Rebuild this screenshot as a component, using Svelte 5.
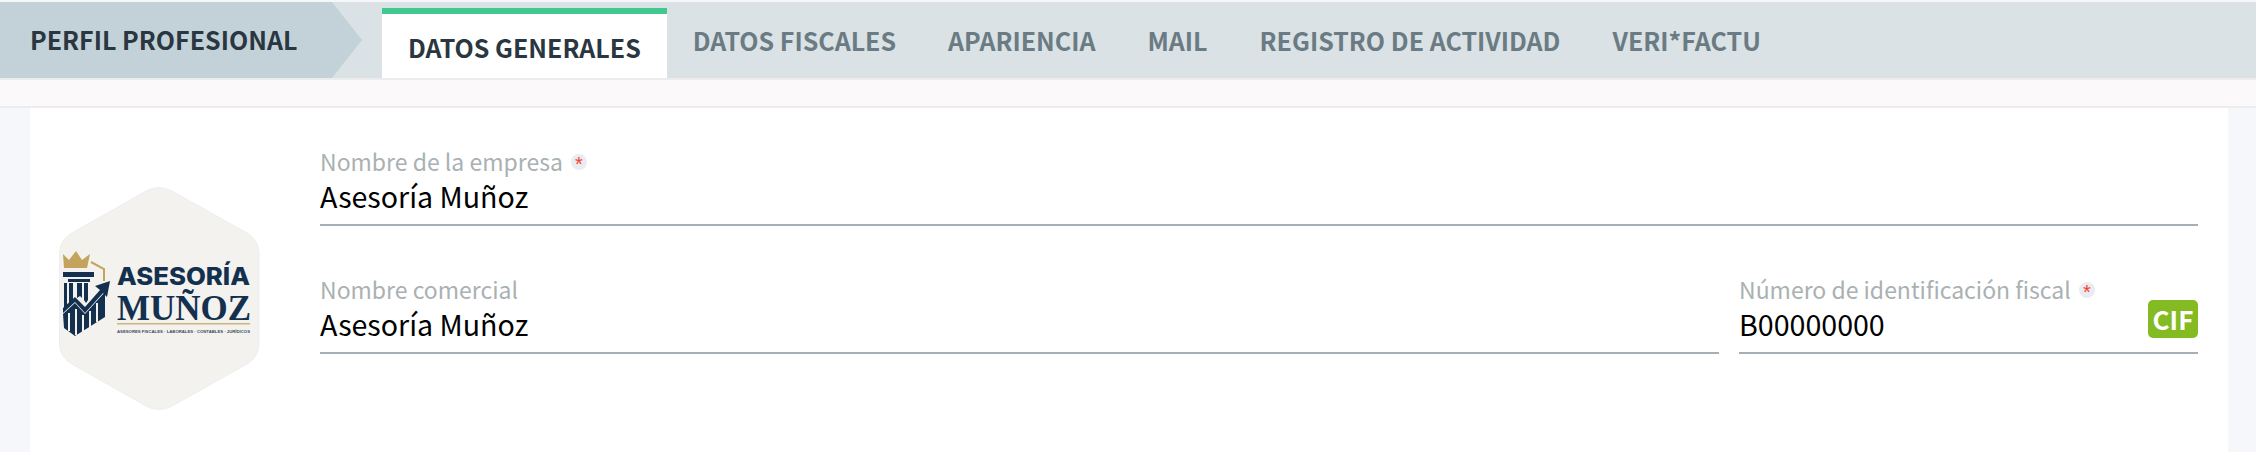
<script>
  const tabs = ["DATOS FISCALES", "APARIENCIA", "MAIL", "REGISTRO DE ACTIVIDAD", "VERI*FACTU"];
</script>

<div class="page">
  <nav class="bar">
    <div class="crumb">PERFIL PROFESIONAL</div>
    <div class="tab active">DATOS GENERALES</div>
    {#each tabs as tab}
      <div class="tab">{tab}</div>
    {/each}
  </nav>
  <div class="stripe"></div>
  <main class="content">
    <div class="logo">
      <svg width="203" height="223" viewBox="0 0 203 223">
        <path
          d="M87 4 Q100 -3 113 4 L188 46 Q200 53 200 67 L200 156 Q200 170 188 177 L113 219 Q100 226 87 219 L13 177 Q0.500 170 0.500 156 L0.500 67 Q0.500 53 13 46 Z"
          fill="#f3f2ef"
          stroke="#eceef0"
        />
        <g class="mark">
          <path d="M5 81 L4 67 L10 73 L17 64 L23 73 L31 67 L28 81 Z" fill="#c4a35c" />
          <path d="M32 75 L45 82 L45 94" fill="none" stroke="#c4a35c" stroke-width="2" />
          <path d="M4 85 H35 V90 H4 Z M9 92 H31 V95 H9 Z" fill="#14304f" />
          <path
            d="M5 96 H8 V120 L5 122 Z M10 96 H14 V114 L10 117 Z M18 96 H23 V111 L21 109 L18 111 Z M25 96 H29 V113 L27 116 L25 113 Z"
            fill="#14304f"
          />
          <path
            d="M4 127 L16 116 L26 127 L46 105 V130 L16 149 L5 141 Z"
            fill="#14304f"
          />
          <path d="M10 126 V144 M17 122 V148 M24 128 V145 M31 124 V140 M38 116 V135" stroke="#f3f2ef" stroke-width="2" />
          <path d="M4 121 L16 110 L26 120 L41 103 L36 99 L51 94 L48 110 L44 106 L26 126 L16 115 L4 126 Z" fill="#14304f" />
        </g>
        <text class="t1" x="58" y="98" textLength="133" lengthAdjust="spacingAndGlyphs">ASESORÍA</text>
        <text class="t2" x="58" y="133" textLength="134" lengthAdjust="spacingAndGlyphs">MUÑOZ</text>
        <rect x="58" y="136" width="133" height="1.500" fill="#cdb67e" />
        <text class="t3" x="58" y="146" textLength="133" lengthAdjust="spacingAndGlyphs">ASESORES FISCALES · LABORALES · CONTABLES · JURÍDICOS</text>
      </svg>
    </div>
    <div class="form">
      <div class="field">
        <div class="label">Nombre de la empresa <span class="req">*</span></div>
        <div class="value">Asesoría Muñoz</div>
      </div>
      <div class="row">
        <div class="field">
          <div class="label">Nombre comercial</div>
          <div class="value">Asesoría Muñoz</div>
        </div>
        <div class="field fiscal">
          <div class="label">Número de identificación fiscal <span class="req">*</span></div>
          <div class="value">B00000000</div>
          <span class="badge">CIF</span>
        </div>
      </div>
    </div>
  </main>
</div>

<style>
  :global(body) {
    margin: 0;
    background: #f5f7fa;
  }
  .page {
    height: 452px;
    display: flex;
    flex-direction: column;
    font-family: "Noto Sans CJK SC", "Noto Sans", sans-serif;
    overflow: hidden;
  }
  .bar {
    margin-top: 2px;
    height: 76px;
    flex: none;
    display: flex;
    background: #dae2e5;
  }
  .crumb {
    width: 362px;
    height: 76px;
    box-sizing: border-box;
    padding: 0 0 3px 30px;
    margin-right: 20px;
    display: flex;
    align-items: center;
    background: #c3d2d9;
    clip-path: polygon(0 0, 332px 0, 362px 50%, 332px 100%, 0 100%);
    font-size: 25px;
    font-weight: 700;
    color: #2a3640;
    white-space: nowrap;
  }
  .tab {
    padding: 0 26px;
    display: flex;
    align-items: center;
    font-size: 25px;
    font-weight: 700;
    color: #6b7b83;
    white-space: nowrap;
  }
  .tab.active {
    margin-top: 6px;
    padding: 2px 26px 0;
    border-top: 6px solid #41c88f;
    background: #fff;
    color: #2a3640;
  }
  .stripe {
    height: 26px;
    flex: none;
    background: #fbf9fa;
    border-top: 2px solid #ececec;
    border-bottom: 2px solid #ececec;
  }
  .content {
    flex: 1;
    margin: 0 28px 0 30px;
    padding: 79px 30px 0 29px;
    display: flex;
    gap: 58px;
    background: #fff;
  }
  .logo {
    flex: none;
    width: 203px;
  }
  .mark {
    filter: blur(0.3px);
  }
  .t1 {
    font-family: "Inter", sans-serif;
    font-weight: 800;
    font-size: 24px;
    fill: #14304f;
  }
  .t2 {
    font-family: "Liberation Serif", serif;
    font-weight: 700;
    font-size: 36px;
    fill: #14304f;
  }
  .t3 {
    font-family: "Liberation Sans", sans-serif;
    font-weight: 700;
    font-size: 4.200px;
    fill: #3c4a5a;
  }
  .form {
    flex: 1;
    display: flex;
    flex-direction: column;
    gap: 47px;
    margin-top: -42px;
  }
  .row {
    display: flex;
    gap: 20px;
  }
  .row .field {
    flex: 1;
  }
  .row .fiscal {
    flex: none;
    width: 459px;
    position: relative;
  }
  .field {
    height: 81px;
    box-sizing: border-box;
    border-bottom: 2px solid #a6b0b4;
  }
  .label {
    height: 32px;
    display: flex;
    align-items: center;
    gap: 8px;
    font-size: 23px;
    color: #a9b1b3;
    white-space: nowrap;
  }
  .req {
    width: 16px;
    height: 16px;
    margin-top: 2px;
    border-radius: 50%;
    background: #e9ecf1;
    color: #f44336;
    font-family: "Liberation Sans", sans-serif;
    font-size: 20px;
    line-height: 21px;
    text-align: center;
  }
  .value {
    height: 38px;
    line-height: 38px;
    font-size: 28.600px;
    color: #000;
    white-space: nowrap;
  }
  .badge {
    position: absolute;
    top: 27px;
    right: 0;
    width: 50px;
    height: 38px;
    border-radius: 5px;
    background: #84bb23;
    color: #fff;
    font-size: 26px;
    font-weight: 700;
    line-height: 37px;
    text-align: center;
  }
</style>
